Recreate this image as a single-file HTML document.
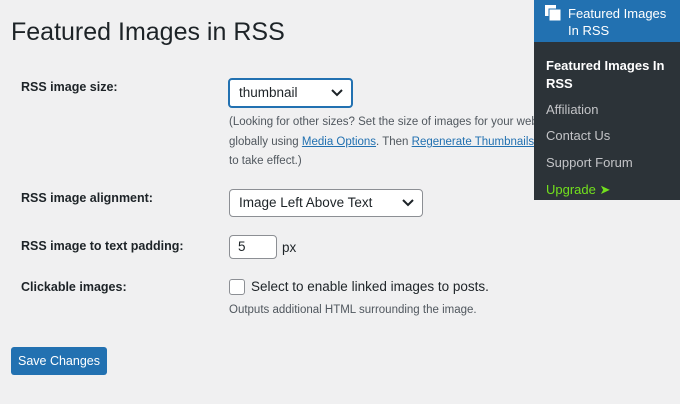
<!DOCTYPE html><html><head><style>
body{margin:0;width:680px;height:404px;background:#f0f0f1;font-family:"Liberation Sans",sans-serif;color:#1d2327;position:relative;overflow:hidden}
.a{position:absolute;white-space:nowrap}
h1{position:absolute;left:11px;top:18px;margin:0;font-size:25px;font-weight:400}
.l{font-size:12.5px;font-weight:bold;left:21px}
.sel{position:absolute;background:#fff;border:1px solid #8c8f94;border-radius:4px;font-size:13.5px;box-sizing:border-box;padding-left:9px}
.d{font-size:11.5px;color:#50575e;left:229px}
a{color:#2271b1;text-decoration:underline}
.menu{position:absolute;left:534px;top:0;width:146px;height:200px;background:#2c3338}
.menu .h{background:#2271b1;height:42px}
.m{position:absolute;left:12px;font-size:13px;color:#c3c4c7}
</style></head><body>
<h1>Featured Images in RSS</h1>
<div class="a l" style="top:80px">RSS image size:</div>
<div class="sel" style="left:228px;top:78px;width:125px;height:30px;border:2px solid #2271b1;line-height:26px">thumbnail<svg style="position:absolute;right:8px;top:9px" width="12" height="8"><path d="M1 1l5 5 5-5" fill="none" stroke="#1d2327" stroke-width="2"/></svg></div>
<div class="a d" style="top:116px">(Looking for other sizes? Set the size of images for your website</div>
<div class="a d" style="top:136px">globally using <a>Media Options</a>. Then <a>Regenerate Thumbnails</a> for</div>
<div class="a d" style="top:155px">to take effect.)</div>
<div class="a l" style="top:191px">RSS image alignment:</div>
<div class="sel" style="left:229px;top:189px;width:194px;height:28px;line-height:26px">Image Left Above Text<svg style="position:absolute;right:8px;top:9px" width="12" height="8"><path d="M1 1l5 5 5-5" fill="none" stroke="#1d2327" stroke-width="2"/></svg></div>
<div class="a l" style="top:239px">RSS image to text padding:</div>
<div class="sel" style="left:229px;top:235px;width:48px;height:24px;line-height:22px;padding-left:8px">5</div>
<div class="a" style="left:282px;top:240px;font-size:13.5px">px</div>
<div class="a l" style="top:280px">Clickable images:</div>
<div class="a" style="left:229px;top:279px;width:14px;height:14px;border:1px solid #8c8f94;border-radius:3px;background:#fff"></div>
<div class="a" style="left:251px;top:279px;font-size:13.5px">Select to enable linked images to posts.</div>
<div class="a d" style="top:304px">Outputs additional HTML surrounding the image.</div>
<div class="a" style="left:11px;top:347px;width:96px;height:28px;background:#2271b1;border-radius:3px;color:#fff;font-size:12.5px;line-height:28px;text-align:center">Save Changes</div>
<div class="menu"><div class="h"></div>
<svg class="a" style="left:10px;top:4px" width="18" height="18"><rect x="1" y="1" width="11" height="11" fill="#fff"/><rect x="5" y="5" width="12" height="12" fill="#fff" stroke="#2271b1"/></svg>
<div class="m" style="left:34px;top:5px;color:#fff;line-height:17px;white-space:normal;width:110px">Featured Images In RSS</div>
<div class="m" style="top:57px;color:#fff;font-weight:bold;line-height:18px;width:130px">Featured Images In RSS</div>
<div class="m" style="top:102px">Affiliation</div>
<div class="m" style="top:128px">Contact Us</div>
<div class="m" style="top:155px">Support Forum</div>
<div class="m" style="top:182px;color:#72e01d">Upgrade ➤</div>
</div>
</body></html>
